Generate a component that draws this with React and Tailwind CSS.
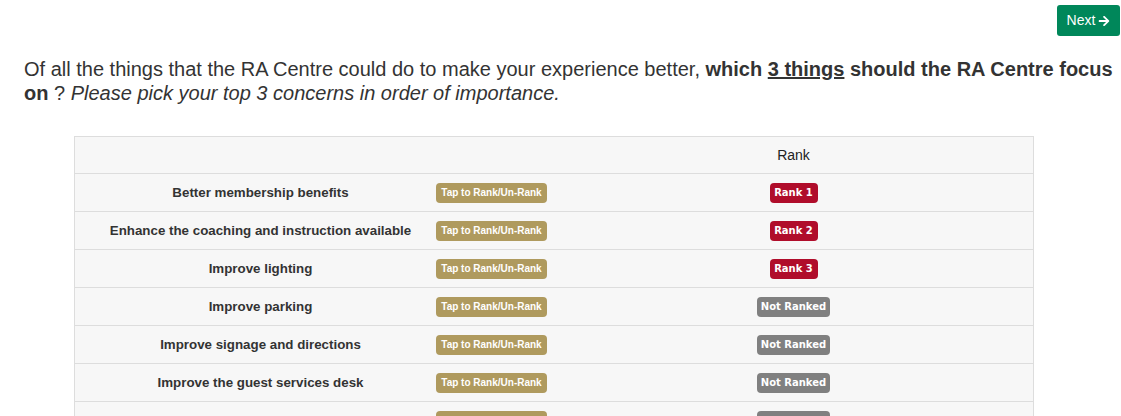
import React from "react";
import { FaArrowRight } from "react-icons/fa";

const rows = [
  ["Better membership benefits", "rank", "Rank 1"],
  ["Enhance the coaching and instruction available", "rank", "Rank 2"],
  ["Improve lighting", "rank", "Rank 3"],
  ["Improve parking", "none", "Not Ranked"],
  ["Improve signage and directions", "none", "Not Ranked"],
  ["Improve the guest services desk", "none", "Not Ranked"],
  ["Improve the online registration", "none", "Not Ranked"],
];

export default function App() {
  return (
    <div className="w-[1121px] h-[416px] overflow-hidden bg-white" style={{ fontFamily: '"Liberation Sans", Arial, sans-serif' }}>
      <div className="flex justify-end pt-[5px] pr-[1px]">
        <button className="h-[31px] w-[63px] rounded-[3px] bg-[#00875a] text-white text-[14px] flex items-center justify-center gap-[3px]">
          <span>Next</span>
          <FaArrowRight className="w-[12px] h-[12px]" />
        </button>
      </div>
      <p className="mt-[21px] ml-[24px] mr-[8px] text-[20px] leading-[24px] text-[#333]">
        Of all the things that the RA Centre could do to make your experience better,{" "}
        <b>which <u>3 things</u> should the RA Centre focus on</b> ? <i>Please pick your top 3 concerns in order of importance.</i>
      </p>
      <div className="mt-[31px] ml-[74px] w-[960px] border border-[#dddddd] bg-[#f7f7f7] text-[13.33px] text-[#333]">
        <div className="grid grid-cols-[355px_124px_1fr] h-[36px] items-center">
          <div />
          <div />
          <div className="text-center text-[14px] font-medium text-[#222]">Rank</div>
        </div>
        {rows.map(([label, kind, rank], i) => (
          <div key={i} className="grid grid-cols-[355px_124px_1fr] h-[38px] items-center border-t border-[#dddddd]">
            <div className="pl-[16px] text-center font-bold text-[#333] whitespace-nowrap">{label}</div>
            <div className="pl-[6px]">
              <span className="inline-flex items-center justify-center w-[111px] h-[20px] rounded-[4px] bg-[#af9a5e] text-white text-[10px] font-bold">
                Tap to Rank/Un-Rank
              </span>
            </div>
            <div className="flex justify-center">
              <span
                className={
                  kind === "rank"
                    ? "inline-flex items-center justify-center h-[20px] w-[48px] rounded-[4px] bg-[#b00d2b] text-white text-[10px] font-bold"
                    : "inline-flex items-center justify-center h-[20px] w-[73px] rounded-[4px] bg-[#808080] text-white text-[10px] font-bold"
                }
                style={{ fontFamily: '"DejaVu Sans", Verdana, sans-serif' }}
              >
                {rank}
              </span>
            </div>
          </div>
        ))}
      </div>
    </div>
  );
}
